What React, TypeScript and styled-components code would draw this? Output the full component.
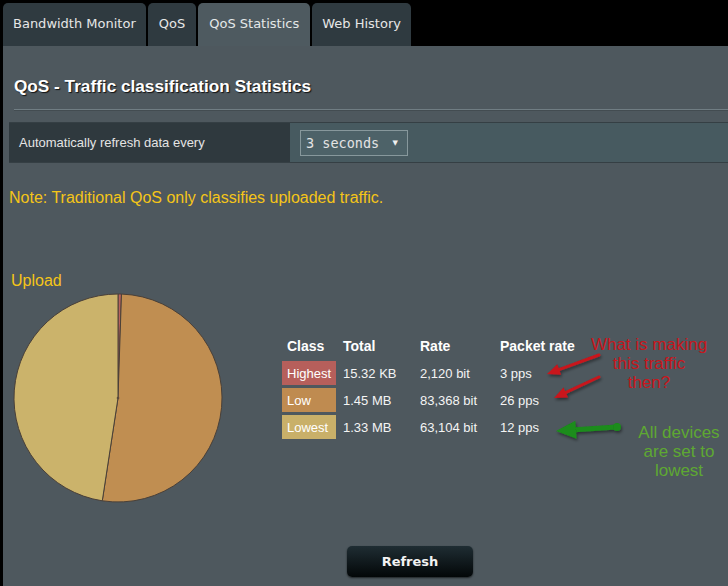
import React from "react";
import styled, { createGlobalStyle } from "styled-components";

const Global = createGlobalStyle`
  html, body { margin: 0; padding: 0; background: #000; }
  body { width: 728px; height: 586px; overflow: hidden; font-family: "Liberation Sans", Arial, sans-serif; }
`;

const Page = styled.div`
  width: 728px;
  height: 586px;
  background: #000;
  display: flex;
  flex-direction: column;
`;

const TabBar = styled.div`
  display: flex;
  gap: 2px;
  padding: 3px 0 0 3px;
  height: 43px;
`;

const Tab = styled.div<{ $active?: boolean; $pad?: number }>`
  display: flex;
  align-items: center;
  padding: 0 ${(p) => p.$pad ?? 10}px 2px;
  border-radius: 5px 5px 0 0;
  background: ${(p) => (p.$active ? "#4e5a60" : "#2f3a40")};
  color: ${(p) => (p.$active ? "#e4e8e8" : "#e6e6e6")};
  font-family: "DejaVu Sans", Verdana, sans-serif;
  font-size: 13px;
`;

const Panel = styled.div`
  margin-left: 3px;
  flex: 1;
  background: #4e585e;
  display: flex;
  flex-direction: column;
`;

const Title = styled.h1`
  margin: 30px 0 0 11px;
  font-size: 17.2px;
  line-height: 20px;
  font-weight: bold;
  color: #fff;
  text-shadow: 1px 1px 1px #111;
`;

const Separator = styled.div`
  margin: 13px 0 0 11px;
  height: 1px;
  background: #707d83;
  box-shadow: 0 1px 0 #434c51;
`;

const RefreshRow = styled.div`
  margin: 12px 0 0 6px;
  height: 41px;
  display: grid;
  grid-template-columns: 281px 1fr;
  border-top: 1px solid #353f44;
  border-bottom: 1px solid #353f44;
  box-sizing: border-box;
`;

const RowLabel = styled.div`
  background: #2f393e;
  display: flex;
  align-items: center;
  padding-left: 10px;
  color: #e4e4e4;
  font-size: 13px;
`;

const RowValue = styled.div`
  background: #475a60;
  display: flex;
  align-items: center;
  padding-left: 10px;
`;

const Select = styled.div`
  width: 108px;
  height: 26px;
  box-sizing: border-box;
  border: 1px solid #87989c;
  background: #4d6268;
  display: flex;
  align-items: center;
  justify-content: space-between;
  padding: 0 9px 0 5px;
  color: #e4e4e4;
  font-family: "DejaVu Sans Mono", "Liberation Mono", monospace;
  font-size: 13.5px;
`;

const Caret = styled.span`
  font-size: 7px;
  color: #f0f0f0;
  font-family: "DejaVu Sans", sans-serif;
`;

const Note = styled.div`
  margin: 26px 0 0 6px;
  font-size: 16px;
  line-height: 18px;
  color: #f5c518;
`;

const ChartLabel = styled.div`
  margin: 64px 0 0 8px;
  font-size: 16px;
  line-height: 19px;
  color: #f5c518;
`;

const ChartRow = styled.div`
  position: relative;
  margin-top: 3px;
  padding-left: 10px;
  display: flex;
  align-items: flex-start;
  gap: 59px;
  height: 210px;
`;

const Table = styled.div`
  margin-top: 41px;
  display: grid;
  grid-template-columns: 54px 74px 77px 80px;
  grid-auto-rows: 24px;
  gap: 3px;
  color: #f4f4f4;
  font-size: 13px;
`;

const Head = styled.div<{ $first?: boolean }>`
  display: flex;
  align-items: center;
  padding-left: ${(p) => (p.$first ? 5 : 4)}px;
  font-weight: bold;
  font-size: 14px;
  color: #fff;
`;

const Cell = styled.div`
  display: flex;
  align-items: center;
  padding-left: 4px;
  white-space: nowrap;
`;

const ClassCell = styled.div<{ $bg: string }>`
  display: flex;
  align-items: center;
  padding-left: 5px;
  background: ${(p) => p.$bg};
  color: #fff;
`;

const Callout = styled.div<{ $color: string; $left: number; $top: number; $width: number }>`
  position: absolute;
  left: ${(p) => p.$left}px;
  top: ${(p) => p.$top}px;
  width: ${(p) => p.$width}px;
  text-align: center;
  color: ${(p) => p.$color};
  font-size: 17px;
  line-height: 19px;
`;

const Overlay = styled.svg`
  position: absolute;
  left: 0;
  top: 0;
  pointer-events: none;
`;

const ButtonRow = styled.div`
  margin: 43px 0 0 344px;
`;

const Button = styled.button`
  width: 126px;
  height: 31px;
  border: none;
  border-radius: 5px;
  background: linear-gradient(#1f2d33, #030708);
  box-shadow: 0 1px 2px rgba(0, 0, 0, 0.6);
  color: #f2f2f2;
  font-family: "DejaVu Sans", Verdana, sans-serif;
  font-weight: bold;
  font-size: 13px;
  padding: 0;
  cursor: pointer;
`;

const rows = [
  { cls: "Highest", bg: "#b65f5b", total: "15.32 KB", rate: "2,120 bit", pps: "3 pps" },
  { cls: "Low", bg: "#bf8b50", total: "1.45 MB", rate: "83,368 bit", pps: "26 pps" },
  { cls: "Lowest", bg: "#c9b069", total: "1.33 MB", rate: "63,104 bit", pps: "12 pps" },
];

const slices = [
  { kb: 15.32, color: "#b8635e" },
  { kb: 1.45 * 1024, color: "#c08e51" },
  { kb: 1.33 * 1024, color: "#cbb36b" },
];

function Pie() {
  const cx = 105, cy = 105, r = 104;
  const total = slices.reduce((s, x) => s + x.kb, 0);
  let acc = 0;
  const pt = (a: number) => {
    const t = (a * Math.PI) / 180;
    return [cx + r * Math.sin(t), cy - r * Math.cos(t)];
  };
  return (
    <svg width="210" height="210" viewBox="0 0 210 210">
      {slices.map((s, i) => {
        const a0 = acc;
        const a1 = acc + (s.kb / total) * 360;
        acc = a1;
        const [x0, y0] = pt(a0);
        const [x1, y1] = pt(a1);
        const large = a1 - a0 > 180 ? 1 : 0;
        return (
          <path
            key={i}
            d={`M${cx},${cy} L${x0},${y0} A${r},${r} 0 ${large} 1 ${x1},${y1} Z`}
            fill={s.color}
            stroke="#4a4038"
            strokeWidth="1"
            strokeLinejoin="round"
          />
        );
      })}
      <circle cx={cx} cy={cy} r="1.3" fill="#5a4a3c" />
    </svg>
  );
}

function Arrow({ x1, y1, x2, y2, color, w, hl, hw, dot }: { x1: number; y1: number; x2: number; y2: number; color: string; w: number; hl: number; hw: number; dot?: boolean }) {
  const dx = x2 - x1, dy = y2 - y1;
  const len = Math.hypot(dx, dy);
  const ux = dx / len, uy = dy / len;
  const bx = x2 - ux * hl, by = y2 - uy * hl;
  const px = -uy * (hw / 2), py = ux * (hw / 2);
  return (
    <g filter="url(#sh)">
      <line x1={x1} y1={y1} x2={bx + ux * 1} y2={by + uy * 1} stroke={color} strokeWidth={w} strokeLinecap="round" />
      <polygon points={`${x2},${y2} ${bx + px},${by + py} ${bx - px},${by - py}`} fill={color} />
      {dot && <circle cx={x1} cy={y1} r={w * 0.8} fill={color} />}
    </g>
  );
}

export default function App() {
  return (
    <>
      <Global />
      <Page>
        <TabBar>
          <Tab>Bandwidth Monitor</Tab>
          <Tab $pad={11}>QoS</Tab>
          <Tab $active $pad={11}>QoS Statistics</Tab>
          <Tab>Web History</Tab>
        </TabBar>
        <Panel>
          <Title>QoS - Traffic classification Statistics</Title>
          <Separator />
          <RefreshRow>
            <RowLabel>Automatically refresh data every</RowLabel>
            <RowValue>
              <Select>
                <span>3 seconds</span>
                <Caret>▼</Caret>
              </Select>
            </RowValue>
          </RefreshRow>
          <Note>Note: Traditional QoS only classifies uploaded traffic.</Note>
          <ChartLabel>Upload</ChartLabel>
          <ChartRow>
            <Pie />
            <Table>
              <Head $first>Class</Head>
              <Head>Total</Head>
              <Head>Rate</Head>
              <Head>Packet rate</Head>
              {rows.map((r) => (
                <React.Fragment key={r.cls}>
                  <ClassCell $bg={r.bg}>{r.cls}</ClassCell>
                  <Cell>{r.total}</Cell>
                  <Cell>{r.rate}</Cell>
                  <Cell>{r.pps}</Cell>
                </React.Fragment>
              ))}
            </Table>
            <Overlay width="725" height="210" viewBox="0 0 725 210">
              <defs>
                <filter id="sh" x="-20%" y="-50%" width="140%" height="200%">
                  <feDropShadow dx="1" dy="2" stdDeviation="1.5" floodColor="#000" floodOpacity="0.45" />
                </filter>
              </defs>
              <Arrow x1={596} y1={62} x2={544} y2={81} color="#c8141b" w={3} hl={13} hw={11} />
              <Arrow x1={596} y1={84} x2={551} y2={105} color="#c8141b" w={3} hl={13} hw={11} />
              <Arrow x1={614} y1={134} x2={553} y2={138} color="#1a8c1a" w={5} hl={20} hw={18} dot />
            </Overlay>
            <Callout $color="#c8161c" $left={571} $top={42} $width={150}>
              What is making<br />this traffic<br />then?
            </Callout>
            <Callout $color="#5ea832" $left={621} $top={130} $width={110}>
              All devices<br />are set to<br />lowest
            </Callout>
          </ChartRow>
          <ButtonRow>
            <Button>Refresh</Button>
          </ButtonRow>
        </Panel>
      </Page>
    </>
  );
}
